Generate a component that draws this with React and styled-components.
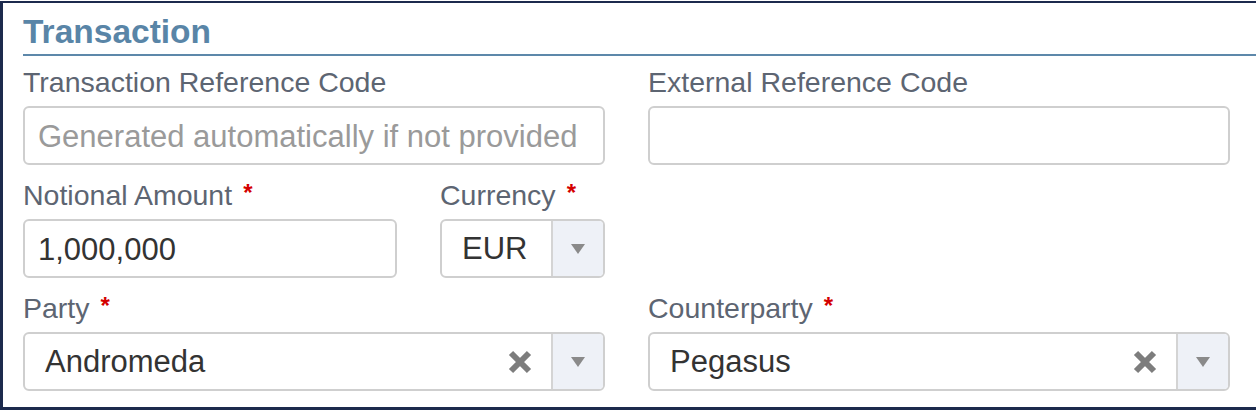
import styled, { createGlobalStyle } from 'styled-components'

const GlobalStyle = createGlobalStyle`
  html, body {
    margin: 0;
    padding: 0;
    background: #ffffff;
    font-family: "Liberation Sans", Arial, Helvetica, sans-serif;
    overflow: hidden;
  }
`

const Frame = styled.div`
  margin-top: 1px;
  width: 1253px;
  height: 404px;
  border-top: 2px solid #1c2a4d;
  border-left: 3px solid #1c2a4d;
  border-bottom: 3px solid #1c2a4d;
  padding-left: 20px;
  box-sizing: content-box;
`

const Heading = styled.h2`
  margin: 0;
  padding-top: 9px;
  padding-bottom: 2px;
  font-size: 33.5px;
  line-height: 40px;
  font-weight: 700;
  color: #5985a7;
  border-bottom: 2px solid #5d88aa;
`

const Form = styled.div`
  display: grid;
  grid-template-columns: 582px 582px;
  column-gap: 43px;
  row-gap: 13px;
  padding-top: 9px;
`

const Split = styled.div`
  display: grid;
  grid-template-columns: 374px 165px;
  column-gap: 43px;
`

const Field = styled.div`
  display: flex;
  flex-direction: column;
`

const Label = styled.label`
  font-size: 28.5px;
  line-height: 34px;
  color: #5d6572;
  margin-bottom: 7px;
  white-space: nowrap;
`

const Required = styled.span`
  position: relative;
  top: -4px;
  line-height: 0;
  color: #d40000;
  font-weight: 700;
  font-size: 24px;
  margin-left: 11px;
`

const TextInput = styled.div`
  height: 59px;
  box-sizing: border-box;
  border: 2px solid #cfcfcf;
  border-radius: 6px;
  padding: 2px 13px 0;
  display: flex;
  align-items: center;
  font-size: 31px;
  color: ${p => (p.$placeholder ? '#9a9a9a' : '#333333')};
  white-space: nowrap;
  overflow: hidden;
`

const Select = styled.div`
  height: 59px;
  box-sizing: border-box;
  border: 2px solid #cfcfcf;
  border-radius: 6px;
  display: flex;
  align-items: stretch;
  overflow: hidden;
`

const SelectValue = styled.div`
  flex: 1;
  display: flex;
  align-items: center;
  padding: 0 0 0 20px;
  font-size: 31px;
  color: #333333;
  white-space: nowrap;
`

const Clear = styled.div`
  width: 50px;
  display: flex;
  align-items: center;
  justify-content: center;
  margin-right: 6px;
`

const ArrowBox = styled.div`
  width: 50px;
  border-left: 2px solid #d4d4d4;
  background: #eef1f7;
  display: flex;
  align-items: center;
  justify-content: center;
`

const Arrow = () => (
  <svg width="16" height="12" viewBox="0 0 16 12">
    <path d="M1 1 L15 1 L8 11 Z" fill="#8a8a8a" />
  </svg>
)

const Cross = () => (
  <svg width="26" height="24" viewBox="0 0 26 24">
    <path d="M4 3 L22 21 M22 3 L4 21" stroke="#7d7d7d" strokeWidth="6" strokeLinecap="butt" />
  </svg>
)

function Dropdown({ value, clearable }) {
  return (
    <Select>
      <SelectValue>{value}</SelectValue>
      {clearable && (
        <Clear>
          <Cross />
        </Clear>
      )}
      <ArrowBox>
        <Arrow />
      </ArrowBox>
    </Select>
  )
}

export default function App() {
  return (
    <>
      <GlobalStyle />
      <Frame>
        <Heading>Transaction</Heading>
        <Form>
          <Field>
            <Label>Transaction Reference Code</Label>
            <TextInput $placeholder>Generated automatically if not provided</TextInput>
          </Field>
          <Field>
            <Label>External Reference Code</Label>
            <TextInput />
          </Field>

          <Split>
            <Field>
              <Label>Notional Amount<Required>*</Required></Label>
              <TextInput>1,000,000</TextInput>
            </Field>
            <Field>
              <Label>Currency<Required>*</Required></Label>
              <Dropdown value="EUR" />
            </Field>
          </Split>
          <div />

          <Field>
            <Label>Party<Required>*</Required></Label>
            <Dropdown value="Andromeda" clearable />
          </Field>
          <Field>
            <Label>Counterparty<Required>*</Required></Label>
            <Dropdown value="Pegasus" clearable />
          </Field>
        </Form>
      </Frame>
    </>
  )
}
